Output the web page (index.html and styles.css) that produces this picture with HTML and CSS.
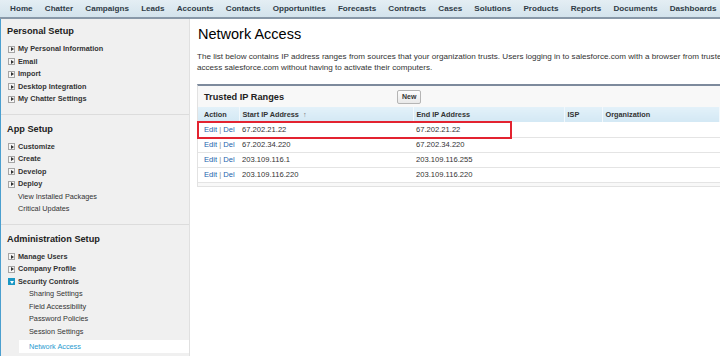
FILE: index.html
```html
<!DOCTYPE html>
<html lang="en">
<head>
    <meta charset="UTF-8">
    <title>Network Access</title>
    <link rel="stylesheet" href="styles.css">
</head>
<body>
<div class="tabbar">
    <a href="#">Home</a>
    <a href="#">Chatter</a>
    <a href="#">Campaigns</a>
    <a href="#">Leads</a>
    <a href="#">Accounts</a>
    <a href="#">Contacts</a>
    <a href="#">Opportunities</a>
    <a href="#">Forecasts</a>
    <a href="#">Contracts</a>
    <a href="#">Cases</a>
    <a href="#">Solutions</a>
    <a href="#">Products</a>
    <a href="#">Reports</a>
    <a href="#">Documents</a>
    <a href="#">Dashboards</a>
</div>

<div class="page">
    <div class="sidebar">
        <div class="section">
            <h2>Personal Setup</h2>
            <ul>
                <li class="node"><span class="toggle"></span>My Personal Information</li>
                <li class="node"><span class="toggle"></span>Email</li>
                <li class="node"><span class="toggle"></span>Import</li>
                <li class="node"><span class="toggle"></span>Desktop Integration</li>
                <li class="node"><span class="toggle"></span>My Chatter Settings</li>
            </ul>
        </div>
        <div class="section">
            <h2>App Setup</h2>
            <ul>
                <li class="node"><span class="toggle"></span>Customize</li>
                <li class="node"><span class="toggle"></span>Create</li>
                <li class="node"><span class="toggle"></span>Develop</li>
                <li class="node"><span class="toggle"></span>Deploy</li>
                <li class="leaf">View Installed Packages</li>
                <li class="leaf">Critical Updates</li>
            </ul>
        </div>
        <div class="section">
            <h2>Administration Setup</h2>
            <ul>
                <li class="node"><span class="toggle"></span>Manage Users</li>
                <li class="node"><span class="toggle"></span>Company Profile</li>
                <li class="node"><span class="toggle open"></span>Security Controls</li>
                <li class="child">Sharing Settings</li>
                <li class="child">Field Accessibility</li>
                <li class="child">Password Policies</li>
                <li class="child">Session Settings</li>
                <li class="child current">Network Access</li>
            </ul>
        </div>
    </div>

    <div class="main">
        <h1>Network Access</h1>
        <p class="intro">
            The list below contains IP address ranges from sources that your organization trusts. Users logging in to salesforce.com with a browser from trusted IP addresses can<br>
            access salesforce.com without having to activate their computers.
        </p>

        <div class="related">
            <div class="related-head">
                <h3>Trusted IP Ranges</h3>
                <button>New</button>
            </div>
            <table>
                <thead>
                <tr>
                    <th class="col-action">Action</th>
                    <th class="col-start">Start IP Address <span class="sort">&#8593;</span></th>
                    <th class="col-end">End IP Address</th>
                    <th class="col-isp">ISP</th>
                    <th class="col-org">Organization</th>
                    <th>Description</th>
                </tr>
                </thead>
                <tbody>
                <tr>
                    <td class="actions"><a href="#">Edit</a> | <a href="#">Del</a></td>
                    <td>67.202.21.22</td>
                    <td>67.202.21.22</td>
                    <td></td>
                    <td></td>
                    <td></td>
                </tr>
                <tr>
                    <td class="actions"><a href="#">Edit</a> | <a href="#">Del</a></td>
                    <td>67.202.34.220</td>
                    <td>67.202.34.220</td>
                    <td></td>
                    <td></td>
                    <td></td>
                </tr>
                <tr>
                    <td class="actions"><a href="#">Edit</a> | <a href="#">Del</a></td>
                    <td>203.109.116.1</td>
                    <td>203.109.116.255</td>
                    <td></td>
                    <td></td>
                    <td></td>
                </tr>
                <tr>
                    <td class="actions"><a href="#">Edit</a> | <a href="#">Del</a></td>
                    <td>203.109.116.220</td>
                    <td>203.109.116.220</td>
                    <td></td>
                    <td></td>
                    <td></td>
                </tr>
                </tbody>
            </table>
            <div class="callout"></div>
        </div>
    </div>
</div>
</body>
</html>
```

FILE: styles.css
```css
* {
    margin: 0;
    padding: 0;
    box-sizing: border-box;
}

body {
    font-family: "Liberation Sans", Arial, sans-serif;
    color: #333;
    background-color: #fff;
    width: 720px;
    height: 356px;
    overflow: hidden;
}

a {
    text-decoration: none;
}

/* top tabs */
.tabbar {
    display: flex;
    height: 19px;
    padding-left: 4px;
    background: linear-gradient(#e4eef4, #d3e3ec);
    border-bottom: 2px solid #8898a8;
    white-space: nowrap;
}

.tabbar a {
    padding: 0 6.1px;
    font-size: 8.1px;
    font-weight: bold;
    line-height: 17px;
    color: #2f3b46;
}

.page {
    display: flex;
    height: 337px;
}

/* setup sidebar */
.sidebar {
    flex: 0 0 190px;
    background-color: #f0f0f0;
    border-left: 1px solid #4b9fcf;
    border-right: 1px solid #e0e0e0;
}

.section {
    padding: 6px 0 8px;
    border-top: 1px solid #dcdcdc;
}

.section:first-child {
    padding-top: 4px;
    border-top: none;
}

.section h2 {
    padding-left: 6px;
    font-size: 9.2px;
    line-height: 16px;
    color: #222;
}

.section ul {
    list-style: none;
    margin-top: 4px;
}

.section li {
    font-size: 7.3px;
    line-height: 12.5px;
    white-space: nowrap;
}

.node {
    display: flex;
    align-items: center;
    padding-left: 7px;
    font-weight: bold;
}

.leaf {
    padding-left: 17px;
}

.child {
    padding-left: 28px;
}

.child.current {
    margin: 2px 0 0 18px;
    padding-left: 10px;
    line-height: 13px;
    background-color: #fff;
    color: #2a9bd0;
}

.toggle {
    position: relative;
    width: 7px;
    height: 7px;
    margin-right: 3px;
    background-color: #f6f6f6;
    border: 1px solid #a5a5a5;
}

.toggle::after {
    content: "";
    position: absolute;
    left: 1.5px;
    top: 0.5px;
    border-left: 3px solid #333;
    border-top: 2px solid transparent;
    border-bottom: 2px solid transparent;
}

.toggle.open {
    background-color: #1a97c4;
    border-color: #1a97c4;
}

.toggle.open::after {
    left: 0.5px;
    top: 1.5px;
    border-top: 3px solid #fff;
    border-left: 2px solid transparent;
    border-right: 2px solid transparent;
    border-bottom: none;
}

/* main content */
.main {
    flex: 0 0 640px;
    padding: 6px 0 0 7px;
}

h1 {
    padding-left: 1px;
    font-size: 14.5px;
    font-weight: normal;
    line-height: 18px;
    color: #000;
}

.intro {
    margin-top: 9px;
    font-size: 8.1px;
    line-height: 10.5px;
    white-space: nowrap;
}

.related {
    position: relative;
    margin-top: 11px;
    background-color: #f8f8f8;
    border-top: 2px solid #7d8a9c;
    border-left: 1px solid #e2e2e2;
    border-bottom: 1px solid #e2e2e2;
    padding-bottom: 3px;
}

.related-head {
    display: flex;
    align-items: center;
    height: 21px;
    padding-left: 6px;
}

.related-head h3 {
    flex: 0 0 193px;
    font-size: 9.2px;
    color: #222;
}

.related-head button {
    height: 14px;
    padding: 0 4px;
    font-family: inherit;
    font-size: 7px;
    font-weight: bold;
    color: #333;
    background: linear-gradient(#fdfdfd, #e9e9e9);
    border: 1px solid #b5b5b5;
    border-radius: 2px;
}

table {
    width: 100%;
    border-collapse: collapse;
    background-color: #fff;
    table-layout: fixed;
}

th, td {
    height: 15px;
    padding: 0 0 0 3px;
    font-size: 7.6px;
    text-align: left;
    white-space: nowrap;
}

th {
    background: linear-gradient(#e3f1f9, #d3e8f4);
    border-left: 1px solid #f2f8fc;
    font-size: 7.3px;
    font-weight: bold;
    color: #333;
}

th:first-child {
    border-left: none;
}

td {
    border-bottom: 1px solid #e4e4e4;
}

.col-action {
    width: 41px;
}

.col-start {
    width: 174px;
}

.col-end {
    width: 151px;
}

.col-isp {
    width: 38px;
}

.col-org {
    width: 117px;
}

th.col-action,
td.actions {
    padding-left: 6px;
}

.sort {
    margin-left: 2px;
    font-weight: normal;
    color: #777;
}

.actions {
    color: #888;
}

.actions a {
    color: #1b63ad;
}

/* red annotation around the first row */
.callout {
    position: absolute;
    left: -1px;
    top: 35px;
    width: 315px;
    height: 18px;
    border: 2px solid #e32330;
}
```
